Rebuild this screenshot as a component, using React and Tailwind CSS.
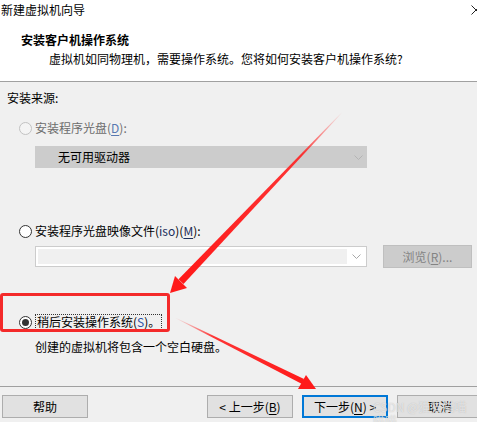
import React from "react";

const FONT = { fontFamily: '"Microsoft YaHei UI", "Noto Sans CJK SC", "Noto Sans", sans-serif' };

/* ——— 单选按钮 ——— */
const Radio = ({ checked = false, disabled = false }) => (
  <span
    className={`flex h-[13px] w-[13px] shrink-0 items-center justify-center rounded-full border ${
      disabled ? "border-[#c2c2c2] bg-[#f4f4f4]" : "border-[#333333] bg-white"
    }`}
  >
    {checked && <span className="block h-[7px] w-[7px] rounded-full bg-[#333333]" />}
  </span>
);

const Chevron = ({ color = "#a8a8a8" }) => (
  <svg width="9" height="5" viewBox="0 0 9 5" className="shrink-0">
    <path d="M0.5 0.5 L4.5 4.5 L8.5 0.5" fill="none" stroke={color} strokeWidth="1" />
  </svg>
);

const Btn = ({ children, primary = false, className = "" }) => (
  <div
    className={`flex h-[23px] w-[86px] shrink-0 items-center justify-center bg-[#e1e1e1] text-[12px] text-black ${
      primary ? "border-2 border-[#0078d7]" : "border border-[#adadad]"
    } ${className}`}
  >
    {children}
  </div>
);

export default function App() {
  return (
    <div className="relative flex h-[422px] w-[477px] flex-col overflow-hidden bg-[#f0f0f0] text-[12px] text-black" style={FONT}>
      {/* 标题栏 */}
      <div className="flex h-[19px] items-center justify-between bg-white pl-[1px]">
        <span className="leading-none">新建虚拟机向导</span>
        <svg width="10" height="10" viewBox="0 0 10 10" className="-mr-[4px]">
          <path d="M0.5 0.5 L9.5 9.5 M9.5 0.5 L0.5 9.5" stroke="#222" strokeWidth="1" />
        </svg>
      </div>

      {/* 页眉 */}
      <div className="flex h-[63px] flex-col border-b border-[#a0a0a0] bg-white pt-[12px]">
        <div className="flex h-[18px] items-center pl-[21px] font-bold">安装客户机操作系统</div>
        <div className="flex h-[20px] items-center pl-[49px]">
          虚拟机如同物理机，需要操作系统。您将如何安装客户机操作系统?
        </div>
      </div>

      {/* 主体 */}
      <div className="flex flex-1 flex-col border-b border-[#a0a0a0] pt-[6px]">
        <div className="flex h-[19px] items-center pl-[7px]">安装来源:</div>

        <div className="mt-[12px] flex h-[18px] items-center gap-[3px] pl-[19px] text-[#6d6d6d]">
          <Radio disabled />
          <span>
            安装程序光盘(<span className="text-[#5878b0] underline underline-offset-2">D</span>):
          </span>
        </div>

        <div className="ml-[35px] mt-[9px] flex h-[22px] w-[332px] items-center justify-between bg-[#cccccc] pl-[23px] pr-[4px]">
          <span>无可用驱动器</span>
          <Chevron color="#b4b4b4" />
        </div>

        <div className="mt-[54px] flex h-[18px] items-center gap-[3px] pl-[19px]">
          <Radio />
          <span>
            安装程序光盘映像文件(<span className="text-[#1c2f5c]">iso</span>)(
            <span className="text-[#1c2f5c] underline underline-offset-2">M</span>):
          </span>
        </div>

        <div className="mt-[5px] flex h-[23px] items-center gap-[16px] pl-[35px]">
          <div className="flex h-[21px] w-[332px] items-center gap-[5px] border border-[#cccccc] bg-white p-[2px] pr-[5px]">
            <div className="h-full flex-1 bg-[#f0f0f0]" />
            <Chevron />
          </div>
          <div className="flex h-[23px] w-[89px] items-center justify-center border border-[#bfbfbf] bg-[#cccccc] text-[#838383]">
            浏览(<span className="underline underline-offset-2">R</span>)...
          </div>
        </div>

        <div className="mt-[45px] flex h-[18px] items-center gap-[3px] pl-[19px]">
          <Radio checked />
          <span className="border border-dotted border-[#333333] px-[1px] leading-[14px]">
            稍后安装操作系统(<span className="text-[#2f55a8] underline underline-offset-2">S</span>)。
          </span>
        </div>

        <div className="mt-[7px] flex h-[18px] items-center pl-[35px]">创建的虚拟机将包含一个空白硬盘。</div>
      </div>

      {/* 底部按钮 */}
      <div className="flex h-[35px] items-start pl-[2px] pt-[8px]">
        <Btn className="w-[85px]">帮助</Btn>
        <Btn className="ml-[119px]">
          &lt; 上一步(<span className="underline underline-offset-2">B</span>)
        </Btn>
        <Btn primary className="ml-[9px]">
          下一步(<span className="underline underline-offset-2">N</span>) &gt;
        </Btn>
        <Btn className="ml-[9px]">取消</Btn>
      </div>

      {/* 标注：红框 */}
      <div className="pointer-events-none absolute left-0 top-[293px] h-[39px] w-[170px] rounded-[3px] border-[3px] border-[#f42a2a]" />

      {/* 水印 */}
      <div className="pointer-events-none absolute left-[373px] top-[400px] text-[12px] leading-[14px] text-white/60 [text-shadow:0_0_1px_rgba(140,140,140,0.6)]">
        CSDN @猫猫猫喵喵喵.
      </div>

      {/* 标注：箭头 */}
      <svg className="pointer-events-none absolute left-0 top-0" width="477" height="422">
        <defs>
          <linearGradient id="a1" x1="342" y1="112" x2="181" y2="281" gradientUnits="userSpaceOnUse">
            <stop offset="0" stopColor="#ff2020" stopOpacity="0" />
            <stop offset="0.25" stopColor="#ff2020" stopOpacity="0.9" />
            <stop offset="1" stopColor="#ff1a1a" />
          </linearGradient>
          <linearGradient id="a2" x1="175" y1="318" x2="302" y2="382" gradientUnits="userSpaceOnUse">
            <stop offset="0" stopColor="#ff2020" stopOpacity="0" />
            <stop offset="0.3" stopColor="#ff2020" stopOpacity="0.9" />
            <stop offset="1" stopColor="#ff1a1a" />
          </linearGradient>
        </defs>
        <polygon points="342,112 342.4,112.4 183.5,284 178.5,279.3" fill="url(#a1)" />
        <polygon points="170,293 175,276 187,288" fill="#ff1a1a" />
        <polygon points="175,318 175.3,317.6 304,379 302,384" fill="url(#a2)" />
        <polygon points="316,389 298,389 306,375" fill="#ff1a1a" />
      </svg>
    </div>
  );
}
